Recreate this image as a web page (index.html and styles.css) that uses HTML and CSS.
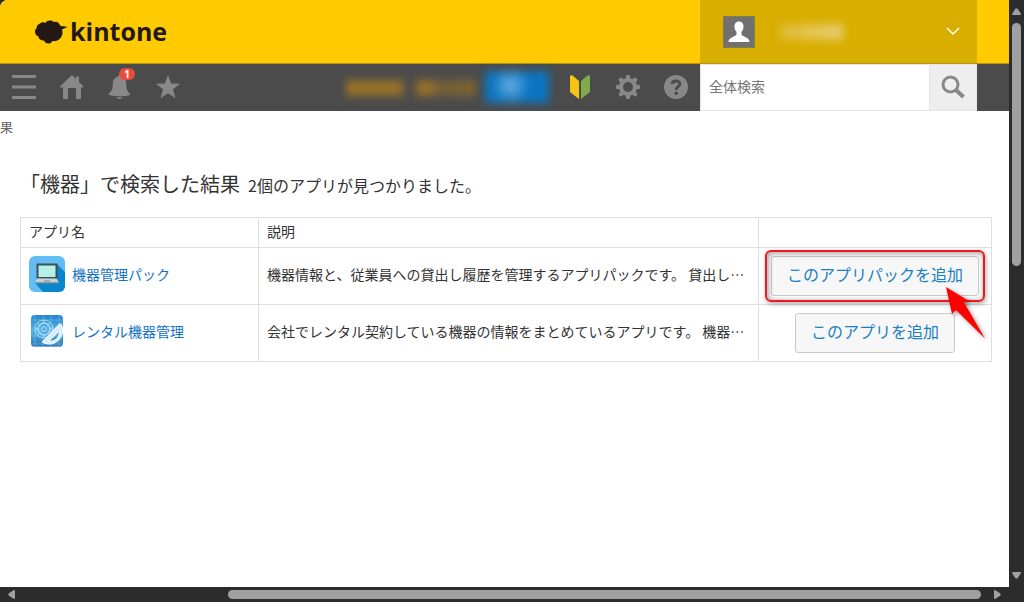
FILE: index.html
```html
<!DOCTYPE html>
<html lang="ja">
<head>
<meta charset="utf-8">
<meta name="viewport" content="width=device-width, initial-scale=1">
<title>kintone</title>
<link rel="stylesheet" href="styles.css">
</head>
<body>
<div class="window">
  <div class="page">
    <header class="header">
      <a class="logo" href="#">
        <svg class="logo-mark" viewBox="0 0 33 24" width="33" height="24" aria-hidden="true"><path fill="#231815" d="M4.500 4C6 2 9 2 10.500 3C12 0 17 0 18.500 2C21 1 24.500 2 25 5.500C26.500 6.500 29 6 32.500 7L28 9L27 9.500C28 12.500 27.500 16 25.500 18C24 20.500 20.500 21.500 17.500 21C16 24.500 10 24.500 9 20.500C6 20.500 3.500 19 3.500 16.500C-.5 15.500-1 10 1.500 8.500C1.500 6 2.500 4.500 4.500 4Z"/></svg>
        <span class="logo-text">kintone</span>
      </a>
      <button class="user" type="button" aria-label="ユーザーメニュー">
        <svg class="avatar" viewBox="0 0 32 32" width="32" height="32" aria-hidden="true"><path fill="#707070" stroke="#8a7a45" d="M.5.5h31v31H.5z"/><path fill="#fff" d="M16 5.500c3 0 4.600 2.200 4.500 5c0 2.500-1 4.300-2 5.500v2.500c.5 2 8 2.500 8 7.500h-21c0-5 7.500-5.500 8-7.500V16c-1-1.200-2-3-2-5.500c-.1-2.800 1.500-5 4.500-5Z"/></svg>
        <span class="user-name"></span>
        <svg class="chevron" viewBox="0 0 14 9" width="14" height="9" aria-hidden="true"><path fill="none" stroke="#fff" stroke-width="1.500" d="M1 1l6 6 6-6"/></svg>
      </button>
    </header>
    <nav class="toolbar">
      <button class="tool" type="button" aria-label="メニュー"><svg viewBox="0 0 24 24" width="24" height="24"><path fill="#888" d="M0 0h24v3H0zM0 10.500h24v3H0zM0 21h24v3H0z"/></svg></button>
      <button class="tool" type="button" aria-label="ポータル"><svg viewBox="0 0 24 24" width="24" height="24"><path fill="#888" d="M12 0l4 4V1.500h3v5.500l4.500 4.500v1h-2.500v11.500h-5V13H8v11H3V12.500H0v-1z"/></svg></button>
      <button class="tool" type="button" aria-label="通知"><svg viewBox="0 0 24 24" width="24" height="24"><path fill="#888" d="M11.500 0c1.200 0 1.800.8 1.800 1.800c3.700 1 5 4 5 7.700c0 5.500 1.700 7.500 4.200 9.500c0 3-22 3-22 0c2.500-2 4.200-4 4.200-9.500c0-3.700 1.300-6.700 5-7.700C9.700.8 10.300 0 11.500 0zM8.500 22c2 .4 4 .4 6 0c-.5 2.600-5.500 2.600-6 0z"/></svg><span class="badge">1</span></button>
      <button class="tool" type="button" aria-label="お気に入り"><svg viewBox="0 0 24 24" width="24" height="24"><path fill="#888" d="M12 0l3.200 8.500 8.800.3-7 5.500 2.500 9L12 18.200l-7.500 5.100 2.500-9-7-5.500 8.800-.3z"/></svg></button>
      <span class="notice"></span>
      <span class="purchase"></span>
      <button class="tool" type="button" aria-label="スタートガイド"><svg viewBox="0 0 24 26" width="24" height="26"><path fill="#f5c60f" d="M2 2l2-1 7 6v18l-9-7z"/><path fill="#7fab4c" d="M22 2l-2-1-7 6v18l9-7z"/></svg></button>
      <button class="tool" type="button" aria-label="設定"><svg viewBox="-12 -12 24 24" width="24" height="24"><circle r="7" fill="none" stroke="#888" stroke-width="4"/><g fill="#888"><path id="tooth" d="M-2.500-8l.8-4h3.400l.8 4z"/><use href="#tooth" transform="rotate(45)"/><use href="#tooth" transform="rotate(90)"/><use href="#tooth" transform="rotate(135)"/><use href="#tooth" transform="rotate(180)"/><use href="#tooth" transform="rotate(225)"/><use href="#tooth" transform="rotate(270)"/><use href="#tooth" transform="rotate(315)"/></g></svg></button>
      <button class="tool" type="button" aria-label="ヘルプ"><svg viewBox="0 0 24 24" width="24" height="24"><circle cx="12" cy="12" r="12" fill="#888"/><path fill="none" stroke="#4b4b4b" stroke-width="3" d="M8.200 9c.3-4.200 7.600-4 7.600-.2c0 3-3.600 2.700-3.600 6.200"/><circle cx="12.200" cy="18.200" r="1.800" fill="#4b4b4b"/></svg></button>
      <form class="search">
        <input class="search-input" type="text" placeholder="全体検索" aria-label="全体検索">
        <button class="search-button" type="button" aria-label="検索"><svg viewBox="0 0 24 24" width="24" height="24"><circle cx="9.500" cy="9.500" r="7.500" fill="none" stroke="#888" stroke-width="3"/><path stroke="#888" stroke-width="4" d="M15 15l7.500 7"/></svg></button>
      </form>
    </nav>
    <main class="content">
      <p class="crumb">果</p>
      <div class="results">
        <h1 class="title">「機器」で検索した結果<span class="count">2個のアプリが見つかりました。</span></h1>
        <table class="apps">
          <colgroup><col class="col-name"><col class="col-text"><col></colgroup>
          <thead>
            <tr><th>アプリ名</th><th>説明</th><th></th></tr>
          </thead>
          <tbody>
            <tr>
              <td><a class="app" href="#">
                <svg viewBox="0 0 36 36" width="36" height="36" aria-hidden="true"><rect width="36" height="36" rx="6" fill="#64bdf2"/><path fill="#0a87cc" d="M28 8l8 8v14a6 6 0 0 1-6 6H14l-8-9z"/><path fill="#3b505b" d="M7.500 7.500h21v15h-21z"/><path fill="#b9efe9" d="M9.500 9.500h17v11.500h-17z"/><path fill="#cecfd0" d="M8.500 22.500h19l2.500 4H6z"/><path fill="#7e8b91" d="M6 26.500h24v1H6zM15 24.500h6v1h-6z"/></svg>
                <span>機器管理パック</span></a></td>
              <td class="description">機器情報と、従業員への貸出し履歴を管理するアプリパックです。 貸出し…</td>
              <td class="action"><span class="callout"><button class="add" type="button">このアプリパックを追加</button><svg class="pointer" viewBox="0 0 50 62" width="50" height="62" aria-hidden="true"><path fill="red" d="M4 4l23 14-5 1.500 21 36L14 27l-4 4z"/></svg></span></td>
            </tr>
            <tr>
              <td><a class="app" href="#">
                <svg viewBox="0 0 36 36" width="36" height="36" aria-hidden="true"><defs><linearGradient id="sky" x2="0" y2="1"><stop stop-color="#2585c9"/><stop offset=".5" stop-color="#55b1e8"/><stop offset="1" stop-color="#2878b5"/></linearGradient></defs><rect x="2" y="2" width="32" height="32" rx="4" fill="url(#sky)"/><path stroke="#90cdef" stroke-width=".4" fill="none" d="M6 2v32M14 2v32M22 2v32M30 2v32M2 7h32M2 15h32M2 23h32M2 31h32"/><g fill="none" stroke="#a9daf5"><circle cx="15" cy="16" r="9"/><circle cx="15" cy="16" r="6" stroke-width="1.500"/><circle cx="15" cy="16" r="2.500"/><path d="M15 7v4M15 21v4M6 16h4M20 16h4M9 10l3 3M21 10l-3 3M9 22l3-3"/></g><path fill="#d9edf7" stroke="#fff" fill-rule="evenodd" d="M32 11C38 24 25 36 13 29L30.500 11zM30.500 18L20 28C25 29 31 25 30.500 18z"/><path fill="none" stroke="#79a9c6" d="M4 33.500h28"/></svg>
                <span>レンタル機器管理</span></a></td>
              <td class="description">会社でレンタル契約している機器の情報をまとめているアプリです。 機器…</td>
              <td class="action"><button class="add" type="button">このアプリを追加</button></td>
            </tr>
          </tbody>
        </table>
      </div>
    </main>
  </div>
  <div class="vbar" aria-hidden="true">
    <svg viewBox="0 0 9 7" width="9" height="7"><path fill="#a0a0a0" d="M3.500.5h2L9 6l-.5 1h-8L0 6z"/></svg>
    <div class="vtrack"><div class="vthumb"></div></div>
    <svg viewBox="0 0 9 7" width="9" height="7"><path fill="#a0a0a0" d="M3.500 6.500h2L9 1l-.5-1h-8L0 1z"/></svg>
  </div>
  <div class="hbar" aria-hidden="true">
    <svg viewBox="0 0 7 9" width="7" height="9"><path fill="#a0a0a0" d="M.5 3.500v2L6 9l1-.5v-8L6 0z"/></svg>
    <div class="htrack"><div class="hthumb"></div></div>
    <svg viewBox="0 0 7 9" width="7" height="9"><path fill="#a0a0a0" d="M6.500 3.500v2L1 9l-1-.5v-8L1 0z"/></svg>
  </div>
</div>
</body>
</html>
```
FILE: styles.css
```css
* { box-sizing: border-box; }

body {
  margin: 0;
  background: #2c2c2c;
  color: #333;
  font: 14px/20px "Noto Sans CJK JP", sans-serif;
}

button, input { font: inherit; }

button {
  padding: 0;
  border: 0;
  background: none;
  cursor: pointer;
}

svg { display: block; flex: none; }

.window {
  display: grid;
  grid-template-columns: minmax(0, 1fr) 15px;
  grid-template-rows: 1fr 15px;
  min-height: 100vh;
}

.page {
  background: #fff;
  border-top-left-radius: 8px;
  overflow: hidden;
}

.header {
  display: flex;
  justify-content: space-between;
  height: 64px;
  padding-right: 32px;
  background: #ffcb00;
  border-bottom: 1px solid #b59412;
}

.logo {
  display: flex;
  align-items: center;
  gap: 2px;
  padding-left: 35px;
  color: #231815;
  text-decoration: none;
}

.logo-text {
  padding-bottom: 2px;
  font: bold 25px/32px "Open Sans", sans-serif;
}

.user {
  display: flex;
  align-items: center;
  width: 277px;
  padding: 0 17px 0 23px;
  background: #d8ae00;
}

.user-name {
  width: 64px;
  height: 16px;
  margin-left: 24px;
  background: linear-gradient(90deg, #dfba30, #e9cf70);
  filter: blur(4px);
}

.chevron { margin-left: auto; }

.toolbar {
  display: flex;
  align-items: center;
  height: 47px;
  padding-right: 32px;
  background: #4b4b4b;
}

.tool {
  position: relative;
  display: flex;
  align-items: center;
  justify-content: center;
  width: 48px;
  height: 47px;
  padding-bottom: 1px;
  flex: none;
}

.badge {
  position: absolute;
  top: 4px;
  left: 23px;
  width: 16px;
  height: 12px;
  border-radius: 6px;
  background: #e74c3c;
  color: #fff;
  font: bold 10px/12px "Noto Sans", sans-serif;
}

.notice {
  width: 130px;
  height: 16px;
  margin-left: auto;
  background: linear-gradient(90deg, #98722a 0 42%, #4b4b4b 46% 52%, #98722a 56% 64%, #705e3b 72%, #80672f);
  filter: blur(4px);
}

.purchase {
  width: 64px;
  height: 32px;
  margin: 0 7px 2px 9px;
  background: radial-gradient(circle at 40% 45%, #62aadf 5%, #0a75c2 45%);
  filter: blur(4px);
}

.search {
  display: flex;
  width: 277px;
  height: 47px;
  border: 1px solid #e3e7e8;
}

.search-input {
  flex: 1;
  min-width: 0;
  padding: 0 8px 4px;
  border: 0;
  border-radius: 0;
  background: #fff;
  outline: 0;
}

.search-input::placeholder { color: #757575; opacity: 1; }

.search-button {
  display: flex;
  align-items: center;
  justify-content: center;
  width: 47px;
  padding-bottom: 1px;
  border-left: 1px solid #e3e7e8;
  background: #eee;
}

.crumb {
  margin: 0;
  padding-top: 6px;
  color: #666;
  font-size: 13px;
}

.results { padding: 32px 17px 32px 20px; }

.title {
  margin: 0 0 17px;
  font-size: 20px;
  font-weight: 400;
  line-height: 30px;
}

.count { margin-left: 8px; font-size: 16px; }

.apps {
  width: 100%;
  border-collapse: collapse;
  table-layout: fixed;
}

.col-name { width: 238px; }
.col-text { width: 500px; }

.apps th {
  height: 30px;
  padding: 0 8px 4px;
  border: 1px solid #dfdfdf;
  font-weight: 400;
  text-align: left;
}

.apps td {
  height: 57px;
  padding: 0 8px 4px;
  border: 1px solid #dfdfdf;
}

.app {
  display: flex;
  align-items: center;
  gap: 7px;
  color: #1472c8;
  text-decoration: none;
}

.description {
  overflow: hidden;
  white-space: nowrap;
  text-overflow: ellipsis;
}

.apps .action { padding: 0; text-align: center; }

.add {
  height: 40px;
  padding: 0 15px 5px;
  border: 1px solid #c9c9c9;
  border-radius: 3px;
  background: #f7f7f7;
  color: #1b7fc4;
  font-size: 16px;
}

.callout {
  position: relative;
  display: inline-block;
  vertical-align: middle;
}

.callout::after {
  content: "";
  position: absolute;
  inset: -6px;
  border: 2px solid #f01820;
  border-radius: 6px;
  box-shadow: 1px 2px 5px #0005, inset 1px 1px 5px 1px #0005;
  pointer-events: none;
}

.pointer {
  position: absolute;
  z-index: 1;
  top: 27px;
  right: -13px;
  filter: drop-shadow(2px 2px 2px #0006);
  pointer-events: none;
}

.vbar {
  display: flex;
  flex-direction: column;
  align-items: center;
  gap: 8px;
  padding: 8px 0;
}

.vtrack { flex: 1; width: 9px; }

.vthumb {
  height: 45%;
  border-radius: 5px;
  background: #a0a0a0;
}

.hbar {
  display: flex;
  align-items: center;
  gap: 13px;
  padding: 0 8px;
}

.htrack { flex: 1; }

.hthumb {
  width: 79%;
  height: 9px;
  margin-left: auto;
  border-radius: 5px;
  background: #a0a0a0;
}
```
